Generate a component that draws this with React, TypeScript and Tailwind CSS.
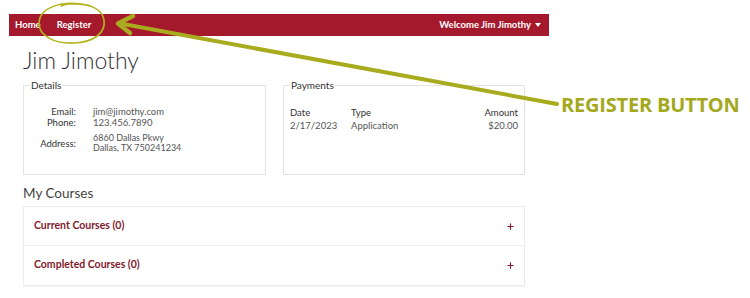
import { Plus } from 'lucide-react';

const navFont = { fontFamily: 'Lato, "Open Sans", sans-serif' };

function Annotation() {
  return (
    <svg className="pointer-events-none absolute left-0 top-0" width="750" height="298" viewBox="0 0 750 298">
      <path
        d="M82 4 C60 1 40 8 39 22 C38 36 55 44 74 43 C94 42 106 33 104 20 C102 8 88 3 70 4 C66 4 63 5 61 6"
        fill="none"
        stroke="#b3b41c"
        strokeWidth="1.6"
        strokeLinecap="round"
      />
      <line x1="557" y1="104" x2="123" y2="24" stroke="#a7ab1d" strokeWidth="4" strokeLinecap="round" />
      <polyline
        points="133,16 118,23.5 130,33"
        fill="none"
        stroke="#a7ab1d"
        strokeWidth="4.5"
        strokeLinecap="round"
        strokeLinejoin="round"
      />
    </svg>
  );
}

function Details() {
  return (
    <fieldset className="h-[97px] w-[243px] border border-[#e3e3e3] px-[6px]">
      <legend className="px-[1px] text-[10px] text-[#333]">Details</legend>
      <div className="mt-[13px] grid grid-cols-[46px_1fr] gap-x-[17px] text-[9.5px] leading-[11px] text-[#555]">
        <span className="text-right text-[#333]">Email:</span>
        <span>jim@jimothy.com</span>
        <span className="text-right text-[#333]">Phone:</span>
        <span>123.456.7890</span>
        <span className="mt-[5px] self-center text-right text-[#333]">Address:</span>
        <span className="mt-[5px] text-[9px] leading-[10px]">
          6860 Dallas Pkwy
          <br />
          Dallas, TX 750241234
        </span>
      </div>
    </fieldset>
  );
}

function Payments() {
  return (
    <fieldset className="h-[97px] w-[242px] border border-[#e3e3e3] px-[6px]">
      <legend className="px-[1px] text-[10px] text-[#333]">Payments</legend>
      <div className="mt-[13px] grid grid-cols-[61px_1fr_auto] text-[9.5px] leading-[13px]">
        <span className="text-[#333]">Date</span>
        <span className="text-[#333]">Type</span>
        <span className="text-right text-[#333]">Amount</span>
        <span className="text-[#555]">2/17/2023</span>
        <span className="text-[#555]">Application</span>
        <span className="text-right text-[#555]">$20.00</span>
      </div>
    </fieldset>
  );
}

function CourseRow({ title, last }: { title: string; last?: boolean }) {
  return (
    <div className={`flex h-[39px] items-start justify-between px-[10px] pt-[11px] ${last ? '' : 'border-b border-[#ececec]'}`}>
      <span className="text-[10.5px] font-bold text-[#7f1a2b]">{title}</span>
      <Plus className="mr-[-1px] mt-[4px] size-[9px] text-[#85192b]" strokeWidth={3} />
    </div>
  );
}

export default function App() {
  return (
    <div className="relative h-[298px] w-[750px] overflow-hidden bg-white" style={navFont}>
      <div className="ml-[9px] w-[540px] pt-[14px]">
        <nav className="flex h-[22px] items-center justify-between bg-[#a5192d] pl-[6px] pr-[8px] text-[9.5px] font-bold text-white">
          <div className="flex gap-[16px]">
            <span>Home</span>
            <span>Register</span>
          </div>
          <div className="flex items-center gap-[4px]">
            <span>Welcome Jim Jimothy</span>
            <svg width="6" height="4" viewBox="0 0 6 4">
              <path d="M0 0 H6 L3 4 Z" fill="white" />
            </svg>
          </div>
        </nav>
        <div className="px-[14px]">
          <h1 className="mt-[9px] text-[23px] font-light leading-[30px] text-[#333]">Jim Jimothy</h1>
          <div className="mt-[3px] flex gap-[17px]">
            <Details />
            <Payments />
          </div>
          <h2 className="mt-[8px] text-[13.5px] leading-[20px] text-[#444]">My Courses</h2>
          <div className="mt-[3px] w-[502px] border border-[#ececec] shadow-[0_1px_1px_rgba(0,0,0,0.04)]">
            <CourseRow title="Current Courses (0)" />
            <CourseRow title="Completed Courses (0)" last />
          </div>
        </div>
      </div>
      <span
        className="absolute left-[561px] top-[93px] text-[20px] font-bold leading-[24px] tracking-[-0.2px] text-[#a3a81c]"
        style={{ fontFamily: '"Open Sans", Lato, sans-serif' }}
      >
        REGISTER BUTTON
      </span>
      <Annotation />
    </div>
  );
}
